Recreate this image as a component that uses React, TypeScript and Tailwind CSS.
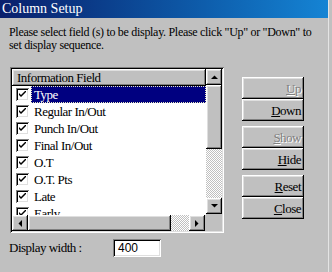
const raised =
  "bg-[#c0c0c0] shadow-[inset_-1px_-1px_#000,inset_1px_1px_#fff,inset_-2px_-2px_#808080,inset_2px_2px_#dfdfdf]";
const sunken =
  "shadow-[inset_1px_1px_#808080,inset_-1px_-1px_#fff,inset_2px_2px_#000,inset_-2px_-2px_#dfdfdf]";
const checker =
  "bg-[repeating-conic-gradient(#c0c0c0_0_25%,#ffffff_0_50%)] bg-[length:2px_2px]";

const fields = [
  "Type",
  "Regular In/Out",
  "Punch In/Out",
  "Final In/Out",
  "O.T",
  "O.T. Pts",
  "Late",
  "Early",
];

function Arrow({ dir }: { dir: "up" | "down" | "left" | "right" }) {
  const pts = {
    up: "0,4 7,4 3.5,0.5",
    down: "0,0 7,0 3.5,3.5",
    left: "4,0 4,7 0.5,3.5",
    right: "0,0 0,7 3.5,3.5",
  }[dir];
  const vert = dir === "up" || dir === "down";
  return (
    <div className={`${raised} w-[16px] h-[16px] flex items-center justify-center shrink-0`}>
      <svg width={vert ? 7 : 4} height={vert ? 4 : 7} viewBox={vert ? "0 0 7 4" : "0 0 4 7"}>
        <polygon points={pts} fill="#000" />
      </svg>
    </div>
  );
}

function Check() {
  return (
    <div className="w-[13px] h-[13px] bg-white shadow-[inset_1px_1px_#808080,inset_-1px_-1px_#fff,inset_2px_2px_#000,inset_-2px_-2px_#dfdfdf] flex items-center justify-center shrink-0">
      <svg width="7" height="7" viewBox="0 0 7 7">
        <path d="M0 2 L0 4 L2 6 L7 1 L7 -1 L2 4 Z" fill="#000" />
      </svg>
    </div>
  );
}

function Btn({ label, u, disabled }: { label: string; u: number; disabled?: boolean }) {
  return (
    <div
      className={`${raised} w-[62px] h-[22px] flex items-center justify-end pr-[3px] text-[13px] leading-none tracking-[-0.5px] ${
        disabled ? "text-[#808080] [text-shadow:1px_1px_0_#fff]" : "text-black"
      }`}
    >
      <span>
        {label.slice(0, u)}
        <span className="underline underline-offset-1">{label[u]}</span>
        {label.slice(u + 1)}
      </span>
    </div>
  );
}

export default function App() {
  return (
    <div className="w-[332px] h-[272px] bg-[#c0c0c0] flex overflow-hidden [font-family:Liberation_Serif,serif] text-black">
      <div className="w-[328px] flex flex-col">
        <div className="h-[18px] bg-gradient-to-r from-[#0a1f6c] to-[#1584d4] text-white text-[14px] leading-[18px] pl-[2px]">
          Column Setup
        </div>
        <p className="mt-[8px] pl-[9px] text-[12px] leading-[13px] tracking-[-0.3px] whitespace-nowrap">
          Please select field (s) to be display. Please click "Up" or "Down" to
          <br />
          set display sequence.
        </p>

        <div className="mt-[15px] ml-[10px] flex">
          <div className={`${sunken} w-[214px] h-[166px] p-[2px] flex flex-col`}>
            <div className="flex h-[146px]">
              <div className="flex-1 bg-white flex flex-col overflow-hidden text-[13px] tracking-[-0.5px]">
                <div className={`${raised} h-[17px] shrink-0 leading-[17px] pl-[5px]`}>
                  Information Field
                </div>
                {fields.map((f, i) => (
                  <div key={f} className="h-[17px] shrink-0 flex items-center pl-[4px]">
                    <Check />
                    <div
                      className={`ml-[2px] flex-1 h-[17px] leading-[15px] pl-[2px] ${
                        i === 0
                          ? "bg-[#000080] text-white border border-dotted border-[#e8e8c0]"
                          : "border border-transparent"
                      }`}
                    >
                      {f}
                    </div>
                  </div>
                ))}
              </div>
              <div className="w-[16px] flex flex-col">
                <Arrow dir="up" />
                <div className={`${raised} h-[64px]`} />
                <div className={`flex-1 ${checker}`} />
                <Arrow dir="down" />
                <div className="h-[1px]" />
              </div>
            </div>
            <div className="flex h-[16px]">
              <div className="flex-1 flex">
                <Arrow dir="left" />
                <div className={`${raised} w-[143px]`} />
                <div className={`flex-1 ${checker}`} />
                <Arrow dir="right" />
              </div>
              <div className="w-[17px] bg-[#c0c0c0]" />
            </div>
          </div>

          <div className="ml-[18px] mt-[10px] flex flex-col">
            <Btn label="Up" u={0} disabled />
            <Btn label="Down" u={0} />
            <div className="h-[5px]" />
            <Btn label="Show" u={0} disabled />
            <Btn label="Hide" u={0} />
            <div className="h-[5px]" />
            <Btn label="Reset" u={0} />
            <Btn label="Close" u={0} />
          </div>
        </div>

        <div className="mt-[5px] pl-[9px] flex items-center">
          <span className="w-[104px] text-[13px] tracking-[-0.5px]">Display width :</span>
          <div className={`${sunken} bg-white w-[48px] h-[18px] pl-[5px] text-[12px] leading-[18px] [font-family:Liberation_Sans,sans-serif]`}>
            400
          </div>
        </div>
      </div>
      <div className="w-[1px] bg-[#e4e4e4]" />
    </div>
  );
}
